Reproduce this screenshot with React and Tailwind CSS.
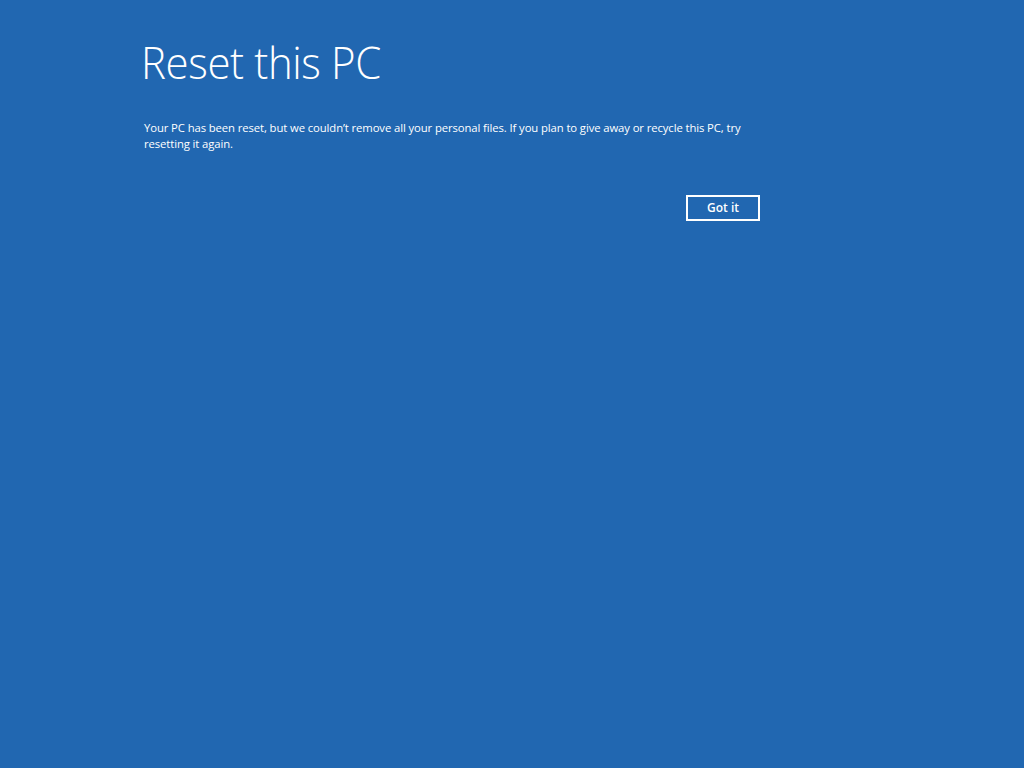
export default function App() {
  return (
    <div className="w-[1024px] h-[768px] bg-[#2167b1] text-white" style={{ fontFamily: '"Open Sans", "Noto Sans", sans-serif' }}>
      <div className="pl-[141px] pt-[32px] w-[760px]">
        <h1 className="inline-block origin-left scale-x-[0.932] text-[45px] font-light leading-[60px] tracking-[-0.4px]">Reset this PC</h1>
        <p className="mt-[28px] pl-[3px] text-[11.3px] leading-[16px] tracking-[-0.1px]">
          Your PC has been reset, but we couldn’t remove all your personal files. If you plan to give away or recycle this PC, try
          <br />
          resetting it again.
        </p>
        <div className="mt-[43px] flex justify-end">
          <button className="w-[74px] h-[26px] border-2 border-white text-[12px] font-semibold leading-none">Got it</button>
        </div>
      </div>
    </div>
  );
}
